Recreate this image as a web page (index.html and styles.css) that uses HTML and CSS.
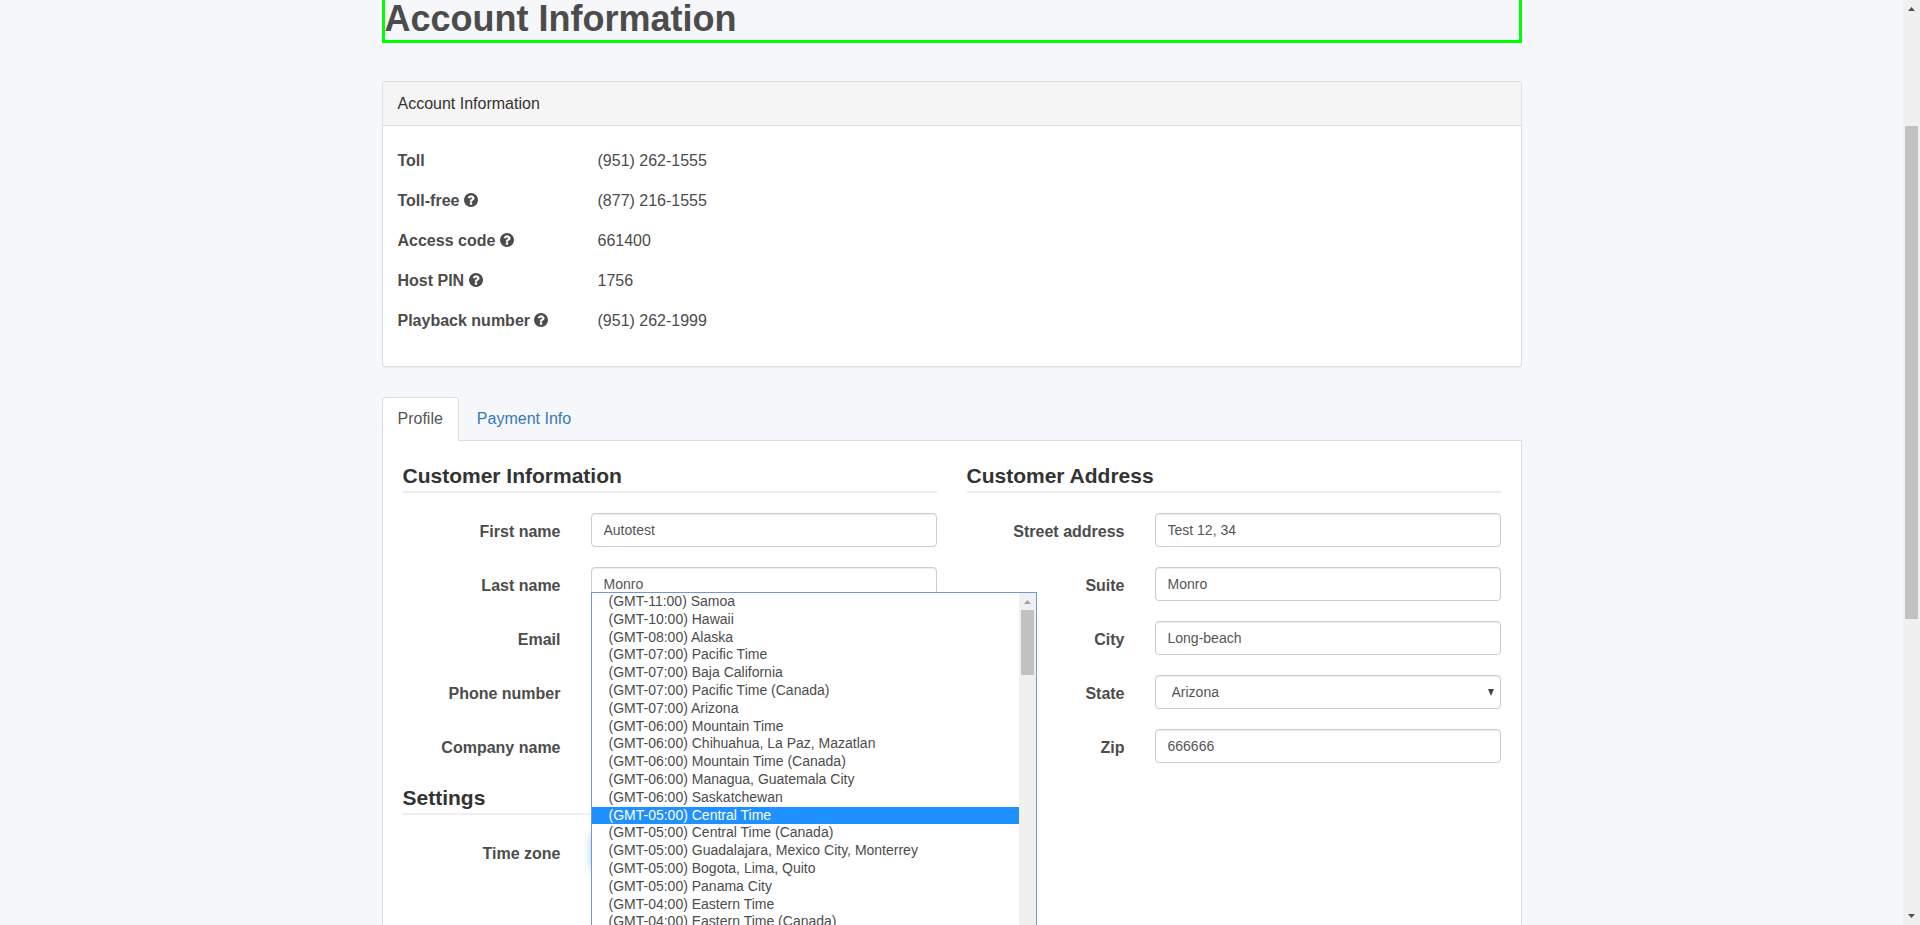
FILE: index.html
```html
<!DOCTYPE html>
<html lang="en">
<head>
<meta charset="utf-8">
<title>Account Information</title>
<link rel="stylesheet" href="styles.css">
</head>
<body>
<svg class="sprite" aria-hidden="true">
  <symbol id="help" viewBox="128 128 1536 1536"><path d="M1024 1376v-192q0-14-9-23t-23-9h-192q-14 0-23 9t-9 23v192q0 14 9 23t23 9h192q14 0 23-9t9-23zm256-672q0-88-55.5-163t-138.5-116-170-41q-243 0-371 213-15 24 8 42l132 100q7 6 19 6 16 0 25-12 53-68 86-92 34-24 86-24 48 0 85.5 26t37.5 59q0 38-20 61t-68 45q-63 28-115.5 86.5t-52.5 125.5v36q0 14 9 23t23 9h192q14 0 23-9t9-23q0-19 21.500-49.500t54.500-49.500q32-18 49-28.500t46-35 44.500-48 28-60.500 12.500-81zm384 192q0 209-103 385.500t-279.500 279.500-385.500 103-385.500-103-279.500-279.500-103-385.500 103-385.500 279.500-279.500 385.500-103 385.500 103 279.500 279.500 103 385.500z"/></symbol>
</svg>
<div class="viewport">
  <main class="page">
    <div class="container">
      <h1 class="page-title">Account Information</h1>

      <section class="panel">
        <h2 class="panel-heading">Account Information</h2>
        <dl class="panel-body">
          <div class="info-row"><dt>Toll</dt><dd>(951) 262-1555</dd></div>
          <div class="info-row"><dt>Toll-free <svg class="help"><use href="#help"/></svg></dt><dd>(877) 216-1555</dd></div>
          <div class="info-row"><dt>Access code <svg class="help"><use href="#help"/></svg></dt><dd>661400</dd></div>
          <div class="info-row"><dt>Host PIN <svg class="help"><use href="#help"/></svg></dt><dd>1756</dd></div>
          <div class="info-row"><dt>Playback number <svg class="help"><use href="#help"/></svg></dt><dd>(951) 262-1999</dd></div>
        </dl>
      </section>

      <nav class="tabs">
        <a class="tab tab-active" href="#profile">Profile</a>
        <a class="tab" href="#payment">Payment Info</a>
      </nav>

      <form class="tab-content" id="profile">
        <div class="column">
          <fieldset class="group">
            <legend class="group-title">Customer Information</legend>
            <div class="field"><label for="first">First name</label><input class="control" id="first" type="text" value="Autotest"></div>
            <div class="field"><label for="last">Last name</label><input class="control" id="last" type="text" value="Monro"></div>
            <div class="field"><label for="email">Email</label><input class="control" id="email" type="email"></div>
            <div class="field"><label for="phone">Phone number</label><input class="control" id="phone" type="tel"></div>
            <div class="field"><label for="company">Company name</label><input class="control" id="company" type="text"></div>
          </fieldset>
          <fieldset class="group">
            <legend class="group-title">Settings</legend>
            <div class="field">
              <label for="zone">Time zone</label>
              <div class="select-wrap">
                <select class="control control-focus" id="zone"><option>(GMT-05:00) Central Time</option></select>
                <div class="popup">
                  <ul class="options" role="listbox" aria-label="Time zone">
                    <li role="option">(GMT-11:00) Samoa</li>
                    <li role="option">(GMT-10:00) Hawaii</li>
                    <li role="option">(GMT-08:00) Alaska</li>
                    <li role="option">(GMT-07:00) Pacific Time</li>
                    <li role="option">(GMT-07:00) Baja California</li>
                    <li role="option">(GMT-07:00) Pacific Time (Canada)</li>
                    <li role="option">(GMT-07:00) Arizona</li>
                    <li role="option">(GMT-06:00) Mountain Time</li>
                    <li role="option">(GMT-06:00) Chihuahua, La Paz, Mazatlan</li>
                    <li role="option">(GMT-06:00) Mountain Time (Canada)</li>
                    <li role="option">(GMT-06:00) Managua, Guatemala City</li>
                    <li role="option">(GMT-06:00) Saskatchewan</li>
                    <li role="option" class="selected" aria-selected="true">(GMT-05:00) Central Time</li>
                    <li role="option">(GMT-05:00) Central Time (Canada)</li>
                    <li role="option">(GMT-05:00) Guadalajara, Mexico City, Monterrey</li>
                    <li role="option">(GMT-05:00) Bogota, Lima, Quito</li>
                    <li role="option">(GMT-05:00) Panama City</li>
                    <li role="option">(GMT-04:00) Eastern Time</li>
                    <li role="option">(GMT-04:00) Eastern Time (Canada)</li>
                  </ul>
                  <div class="scrollbar scrollbar-light" aria-hidden="true">
                    <svg class="scroll-arrow" viewBox="0 0 17 17"><path d="M5 11h7L8.500 7z"/></svg>
                    <div class="popup-thumb"></div>
                  </div>
                </div>
              </div>
            </div>
          </fieldset>
        </div>
        <div class="column">
          <fieldset class="group">
            <legend class="group-title">Customer Address</legend>
            <div class="field"><label for="street">Street address</label><input class="control" id="street" type="text" value="Test 12, 34"></div>
            <div class="field"><label for="suite">Suite</label><input class="control" id="suite" type="text" value="Monro"></div>
            <div class="field"><label for="city">City</label><input class="control" id="city" type="text" value="Long-beach"></div>
            <div class="field">
              <label for="state">State</label>
              <div class="select-wrap">
                <select class="control" id="state"><option>Arizona</option></select>
                <svg class="caret" viewBox="0 0 6 7" aria-hidden="true"><path d="M0 0h6L3 7z"/></svg>
              </div>
            </div>
            <div class="field"><label for="zip">Zip</label><input class="control" id="zip" type="text" value="666666"></div>
          </fieldset>
        </div>
      </form>
    </div>
  </main>
  <div class="scrollbar" aria-hidden="true">
    <svg class="scroll-arrow" viewBox="0 0 17 17"><path d="M5 11h7L8.500 7z"/></svg>
    <div class="track">
      <div class="space-before"></div>
      <div class="thumb"></div>
      <div class="space-after"></div>
    </div>
    <svg class="scroll-arrow" viewBox="0 0 17 17"><path d="M5 6h7L8.500 10z"/></svg>
  </div>
</div>
</body>
</html>
```

FILE: styles.css
```css
*, *::before, *::after { box-sizing: border-box; }

body {
  margin: 0;
  background: #f5f7fb;
  color: #4c4c4c;
  font: 16px/23px "Liberation Sans", Arial, sans-serif;
}

.sprite { display: none; }

.viewport {
  display: flex;
  height: 100vh;
  overflow: hidden;
}

.page {
  flex: 1;
  min-width: 0;
  overflow: hidden;
}

.container {
  max-width: 1140px;
  margin: 0 auto;
}

.page-title {
  margin: 0 0 38px;
  padding-bottom: 2px;
  border: 3px solid #0f0;
  border-top: 0;
  font-size: 36px;
  line-height: 38px;
}

/* Account summary */
.panel {
  margin-bottom: 30px;
  background: #fff;
  border: 1px solid #ddd;
  border-radius: 4px;
  box-shadow: 0 1px 1px rgba(0, 0, 0, .05);
}

.panel-heading {
  margin: 0;
  padding: 10px 15px;
  background: #f5f5f5;
  border-bottom: 1px solid #ddd;
  border-radius: 3px 3px 0 0;
  color: #333;
  font-size: 16px;
  font-weight: normal;
}

.panel-body {
  margin: 0;
  padding: 14px 15px 26px;
}

.info-row {
  display: grid;
  grid-template-columns: 200px 1fr;
  align-items: center;
  height: 40px;
}

.info-row dt { font-weight: bold; }
.info-row dd { margin: 0; }

.help {
  width: 14px;
  height: 14px;
  fill: currentColor;
  vertical-align: -1px;
}

/* Tabs */
.tabs {
  display: flex;
  gap: 2px;
  border-bottom: 1px solid #ddd;
}

.tab {
  margin-bottom: -1px;
  padding: 9px 15px 11px;
  border: 1px solid transparent;
  border-bottom: 0;
  border-radius: 4px 4px 0 0;
  color: #337ab7;
  text-decoration: none;
}

.tab-active {
  background: #fff;
  border-color: #ddd;
  color: #555;
}

.tab-content {
  display: grid;
  grid-template-columns: 1fr 1fr;
  gap: 30px;
  min-height: 600px;
  padding: 20px;
  background: #fff;
  border: 1px solid #ddd;
  border-top: 0;
}

/* Form */
.group {
  min-width: 0;
  margin: 0;
  padding: 0;
  border: 0;
}

.group-title {
  width: 100%;
  margin-bottom: 20px;
  padding: 0;
  border-bottom: 2px solid #eee;
  color: #333;
  font-size: 21px;
  font-weight: bold;
  line-height: 30px;
}

.field {
  display: grid;
  grid-template-columns: 158px 1fr;
  gap: 30px;
  margin-bottom: 20px;
}

.field label {
  padding-top: 7px;
  font-weight: bold;
  text-align: right;
}

.control {
  display: block;
  width: 100%;
  height: 34px;
  padding: 6px 12px;
  background: #fff;
  border: 1px solid #ccc;
  border-radius: 4px;
  box-shadow: inset 0 1px 1px rgba(0, 0, 0, .075);
  color: #555;
  font: 14px/20px "Liberation Sans", Arial, sans-serif;
}

select.control {
  padding-left: 16px;
  appearance: none;
}

.control-focus {
  border-color: #66afe9;
  box-shadow: 0 0 8px rgba(102, 175, 233, .6);
}

.select-wrap { position: relative; }

.caret {
  position: absolute;
  top: 14px;
  right: 7px;
  width: 6px;
  height: 7px;
  fill: #444;
}

/* Time zone list */
.popup {
  position: absolute;
  top: -243px;
  left: 0;
  display: flex;
  width: 446px;
  height: 360px;
  background: #fff;
  border: 1px solid #7098d4;
}

.options {
  flex: 1;
  margin: 0;
  padding: 0;
  overflow: hidden;
  list-style: none;
  font-size: 14px;
  line-height: 17px;
}

.options li {
  height: 18px;
  padding-left: 17px;
}

.options li:nth-child(5n+3) { height: 17px; }

.options .selected {
  background: #1e90ff;
  color: #fff;
}

/* Scrollbars */
.scrollbar {
  display: flex;
  flex-direction: column;
  flex: none;
  width: 17px;
  background: #f0f0f0;
}

.scroll-arrow {
  width: 17px;
  height: 17px;
  fill: #505050;
}

.scrollbar-light .scroll-arrow { fill: #a3a3a3; }

.track {
  display: flex;
  flex: 1;
  flex-direction: column;
}

.space-before { flex: 109; }
.space-after { flex: 289; }

.thumb {
  flex: 493;
  margin: 0 2px;
  background: #c1c1c1;
}

.popup-thumb {
  height: 65px;
  margin: 0 2px;
  background: #c1c1c1;
}
```
